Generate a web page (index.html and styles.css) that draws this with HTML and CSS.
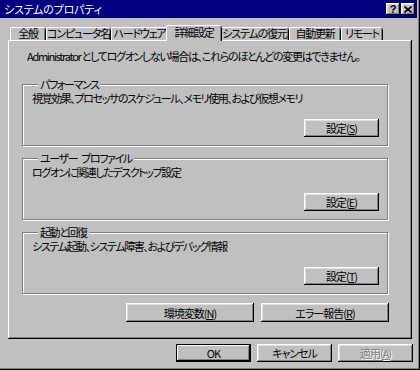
FILE: index.html
```html
<!DOCTYPE html>
<html>
<head>
    <meta charset="utf-8">
    <title>システムのプロパティ</title>
    <link rel="stylesheet" href="styles.css">
</head>
<body>
    <div class="window">
        <div class="titlebar">
            <span class="title">システムのプロパティ</span>
            <div class="caption-buttons">
                <span class="cap-btn cap-help">?</span>
                <span class="cap-btn cap-close">
                    <svg width="8" height="7" viewBox="0 0 8 7"><path d="M0.5 0.5L7.5 6.5M7.5 0.5L0.5 6.5" stroke="#000" stroke-width="1.6" fill="none"/></svg>
                </span>
            </div>
        </div>

        <div class="tabs">
            <div class="tab">全般</div>
            <div class="tab">コンピュータ名</div>
            <div class="tab">ハードウェア</div>
            <div class="tab active">詳細設定</div>
            <div class="tab">システムの復元</div>
            <div class="tab">自動更新</div>
            <div class="tab">リモート</div>
        </div>

        <div class="panel">
            <p class="note">Administrator としてログオンしない場合は、これらのほとんどの変更はできません。</p>

            <fieldset class="group">
                <legend>パフォーマンス</legend>
                <p class="desc">視覚効果、プロセッサのスケジュール、メモリ使用、および仮想メモリ</p>
                <div class="group-actions">
                    <button class="btn">設定(<u>S</u>)</button>
                </div>
            </fieldset>

            <fieldset class="group">
                <legend>ユーザー プロファイル</legend>
                <p class="desc">ログオンに関連したデスクトップ設定</p>
                <div class="group-actions">
                    <button class="btn">設定(<u>E</u>)</button>
                </div>
            </fieldset>

            <fieldset class="group">
                <legend>起動と回復</legend>
                <p class="desc">システム起動、システム障害、およびデバッグ情報</p>
                <div class="group-actions">
                    <button class="btn">設定(<u>T</u>)</button>
                </div>
            </fieldset>

            <div class="panel-actions">
                <button class="btn btn-wide">環境変数(<u>N</u>)</button>
                <button class="btn btn-wide">エラー報告(<u>R</u>)</button>
            </div>
        </div>

        <div class="dialog-actions">
            <button class="btn btn-default">OK</button>
            <button class="btn">キャンセル</button>
            <button class="btn" disabled>適用(<u>A</u>)</button>
        </div>
    </div>
</body>
</html>
```

FILE: styles.css
```css
body {
    margin: 0;
    padding: 0;
    font-family: "Noto Sans CJK JP", "DejaVu Sans", sans-serif;
    font-size: 11px;
    font-feature-settings: "palt";
    letter-spacing: -1.2px;
    color: #000;
    background: #c0c0c0;
}

.window {
    width: 420px;
    height: 370px;
    box-sizing: border-box;
    padding: 0 3px 3px 0;
    background: #c0c0c0;
    box-shadow: inset -1px -1px #000, inset -2px -2px #808080;
}

.titlebar {
    height: 18px;
    display: flex;
    align-items: center;
    justify-content: space-between;
    padding: 0 2px 0 4px;
    background: #000080;
    color: #fff;
}

.title {
    line-height: 18px;
    letter-spacing: -0.2px;
}

.caption-buttons {
    display: flex;
    gap: 1px;
}

.cap-btn {
    width: 14px;
    height: 12px;
    box-sizing: border-box;
    display: flex;
    align-items: center;
    justify-content: center;
    background: #c0c0c0;
    color: #000;
    font-family: "Liberation Sans", sans-serif;
    font-weight: bold;
    font-size: 11px;
    letter-spacing: 0;
    line-height: 12px;
    box-shadow: inset -1px -1px #000, inset 1px 1px #fff, inset -2px -2px #808080, inset 2px 2px #dfdfdf;
}

/* tabs */
.tabs {
    display: grid;
    grid-template-columns: 36px 65px 57px 52px 69px 52px 42px;
    width: 373px;
    height: 15px;
    margin: 7px 0 0 10px;
}

.tab {
    height: 13px;
    margin-top: 2px;
    line-height: 13px;
    text-align: center;
    white-space: nowrap;
    border-radius: 2px 2px 0 0;
    box-shadow: inset 1px 0 #fff, inset 0 1px #fff, inset -1px 0 #000, inset -2px 0 #808080;
}

.tab.active {
    position: relative;
    z-index: 1;
    height: 16px;
    margin: 0 -2px;
    line-height: 15px;
    background: #c0c0c0;
}

/* tab page */
.panel {
    width: 404px;
    height: 299px;
    box-sizing: border-box;
    margin-left: 8px;
    padding: 9px 0 0 14px;
    box-shadow: inset -1px -1px #000, inset 1px 1px #fff, inset -2px -2px #808080;
}

.note {
    margin: 0 0 14px 5px;
    line-height: 14px;
    white-space: nowrap;
    letter-spacing: -1.3px;
}

.group {
    width: 366px;
    box-sizing: border-box;
    margin: 0 0 5px 0;
    padding: 0 8px 8px 9px;
    border: 1px solid #808080;
    box-shadow: inset 1px 1px #fff, 1px 1px #fff;
}

.group legend {
    margin-left: 6px;
    padding: 0 2px;
    line-height: 14px;
    letter-spacing: -1.4px;
    word-spacing: 3px;
    background: #c0c0c0;
}

.desc {
    margin: 0;
    line-height: 14px;
    white-space: nowrap;
    letter-spacing: -1.4px;
}

.group-actions {
    display: flex;
    justify-content: flex-end;
    margin-top: 14px;
}

/* buttons */
.btn {
    width: 75px;
    height: 18px;
    box-sizing: border-box;
    padding: 0;
    border: none;
    font: inherit;
    letter-spacing: -1px;
    color: #000;
    background: #c0c0c0;
    box-shadow: inset -1px -1px #000, inset 1px 1px #fff, inset -2px -2px #808080, inset 2px 2px #dfdfdf;
}

.btn u {
    text-underline-offset: 1px;
}

.btn-wide {
    width: 128px;
    height: 19px;
}

.btn-default {
    border: 1px solid #000;
    box-shadow: inset -1px -1px #000, inset 1px 1px #fff, inset -2px -2px #808080;
}

.btn:disabled {
    color: #808080;
    text-shadow: 1px 1px #fff;
}

.panel-actions {
    width: 367px;
    display: flex;
    justify-content: flex-end;
    gap: 7px;
    margin-top: 9px;
}

.dialog-actions {
    display: flex;
    justify-content: flex-end;
    gap: 6px;
    margin-top: 5px;
    padding-right: 4px;
}
```
